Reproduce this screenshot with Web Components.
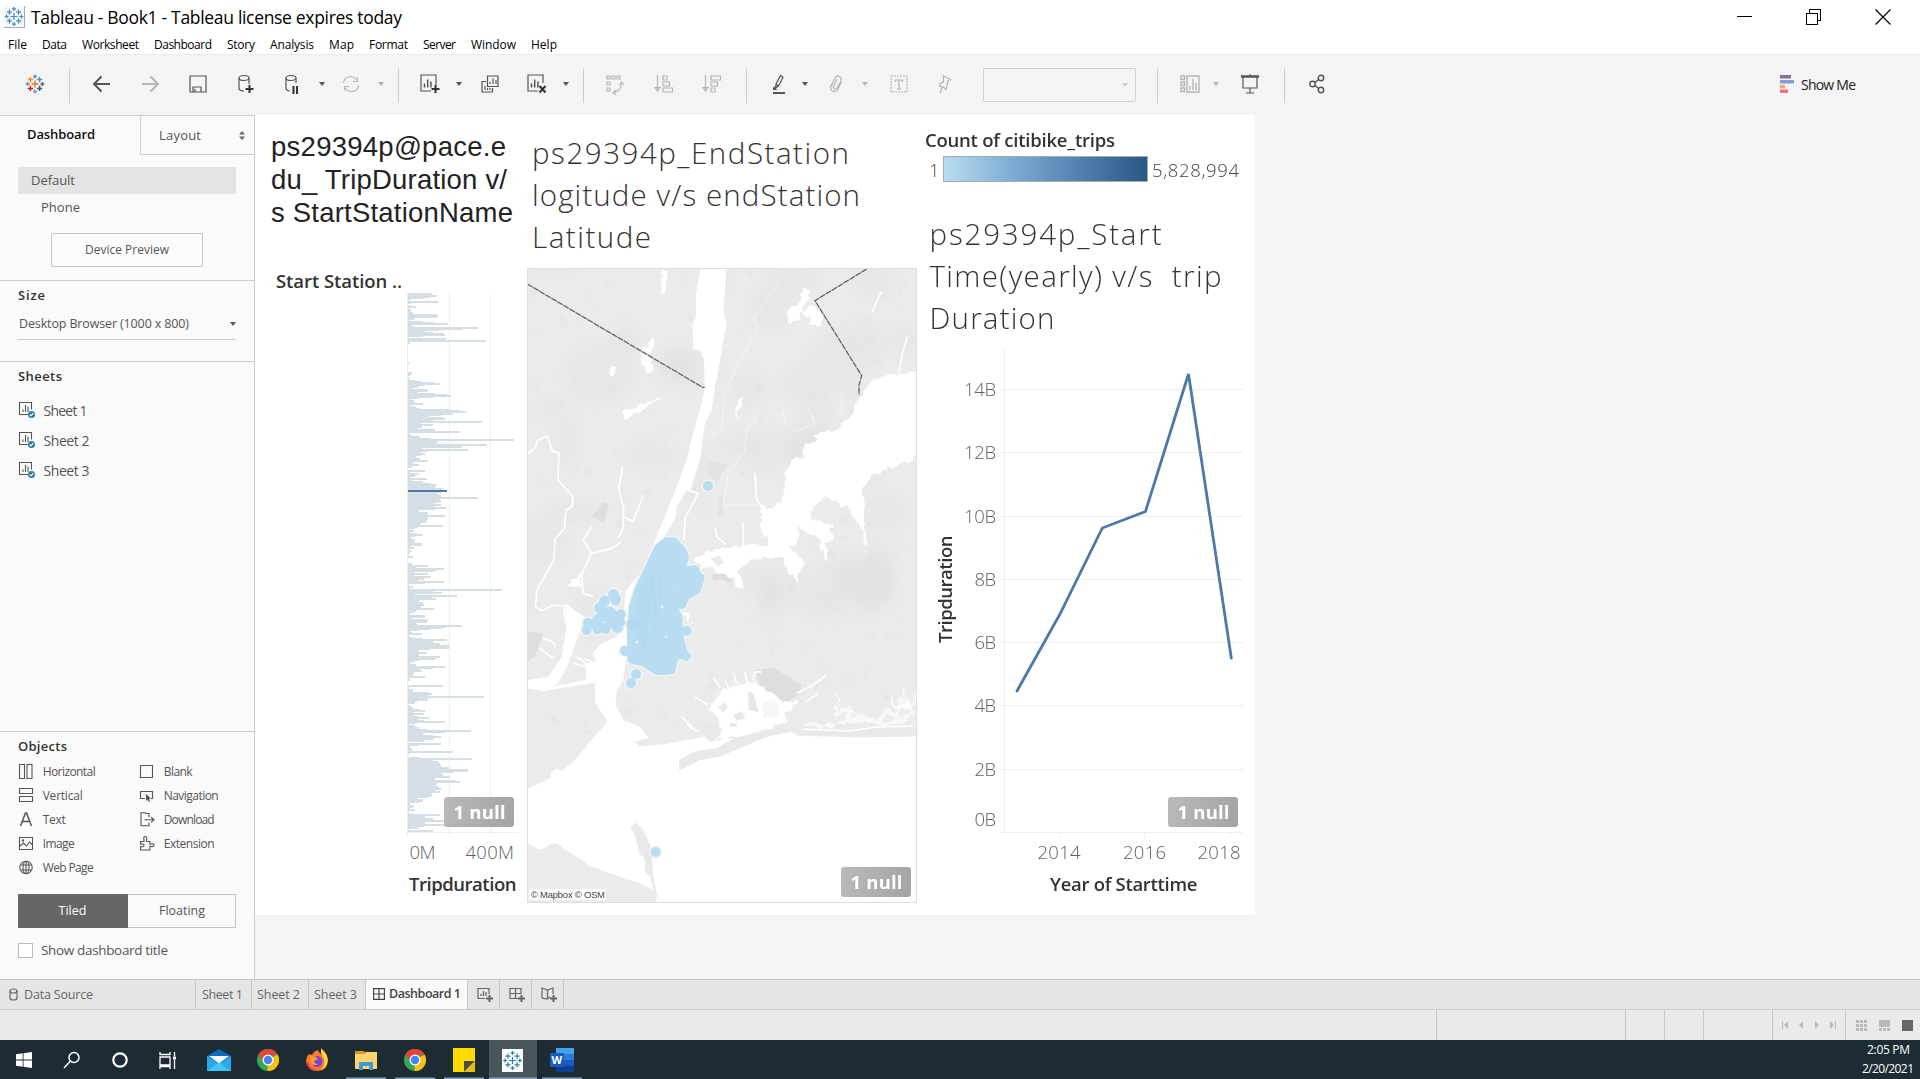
<!DOCTYPE html>
<html lang="en">
<head>
<meta charset="utf-8">
<title>Tableau - Book1</title>
<style>
html,body{margin:0;height:1079px;overflow:hidden;background:#f4f4f4}
body{font-family:"Open Sans","Noto Sans",sans-serif;color:#333}
tb-app{height:1079px}
</style>
</head>
<body>
<tb-app></tb-app>
<script>
class Base extends HTMLElement{
  constructor(){super();const r=this.attachShadow({mode:'open'});r.innerHTML='<style>:host{display:block;box-sizing:border-box}*{box-sizing:border-box}svg{display:block;overflow:visible}'+(this.css||'')+'</style>'+this.html();}
  html(){return '<slot></slot>';}
}
/* One line of text tracked to an exact width */
class FitText extends HTMLElement{
  constructor(){super();this.attachShadow({mode:'open'}).innerHTML='<style>:host{display:block;white-space:pre;flex:none}span{display:inline-block}</style><span><slot></slot></span>';}
  connectedCallback(){
    const w=+this.getAttribute('w'),s=this.shadowRoot.querySelector('span'),n=this.textContent.length;
    if(!w||n<2)return;
    s.style.letterSpacing='0px';
    const nat=s.getBoundingClientRect().width;
    s.style.letterSpacing=((w+1-nat)/(n-1)).toFixed(3)+'px';
    this.style.width=w+'px';
  }
}
customElements.define('fit-text',FitText);

const svg=(w,h,body,extra='')=>`<svg width="${w}" height="${h}" viewBox="0 0 ${w} ${h}" fill="none" stroke="currentColor" stroke-width="1.2" ${extra}>${body}</svg>`;
/* Tableau cross cluster centred on 0,0 */
function crosses(colors){
  const p=[[0,0,3.6],[0,-7.6,2],[0,7.6,2],[-7.4,0,2],[7.4,0,2],[-4.6,-4.4,2.6],[4.6,-4.4,2.6],[-4.6,4.4,2.6],[4.6,4.4,2.6]];
  return p.map(([x,y,r],i)=>`<path d="M${x-r} ${y}h${2*r}M${x} ${y-r}v${2*r}" stroke="${colors[i%colors.length]}"/>`).join('');
}
const plus=(x,y)=>`<path d="M${x-4} ${y}h8M${x} ${y-4}v8" stroke="#333" stroke-width="2"/>`;
const bars=(x,y)=>`<path d="M${x} ${y}v-4M${x+3.2} ${y}v-8M${x+6.4} ${y}v-6" stroke-width="1.5"/>`;
const caret=`<svg width="6" height="4" viewBox="0 0 6 4"><path d="M0 0h6L3 4z" fill="currentColor"/></svg>`;

const icons={
 logo:svg(20,20,`<g transform="translate(10 10)">${crosses(['#e8762c','#5c97b8','#8295b8','#7099a6','#59667e','#eb912c','#5c8fa8','#c72035','#3c5a87'])}</g>`,'style="stroke-width:1.5"'),
 back:svg(20,18,'<path d="M18 9H2M9.500 1.500L2 9 9.500 16.500" stroke-width="2"/>'),
 fwd:svg(20,18,'<path d="M1 9h16M9.500 1.500L17 9 9.500 16.500" stroke-width="2"/>'),
 save:svg(18,18,'<path d="M1 1h16v16H1zM4 17v-5h8v5M6 17v-3"/>'),
 dsplus:svg(18,20,`<ellipse cx="7" cy="4" rx="5" ry="2.500"/><path d="M2 4v11q1 2 5 2M12 4v6"/>${plus(12.5,15)}`),
 dspause:svg(18,20,'<ellipse cx="7" cy="4" rx="5" ry="2.500"/><path d="M2 4v11q1 2 4 2M12 4v5"/><path d="M9.500 12v8M13 12v8" stroke="#333" stroke-width="2"/>'),
 refresh:svg(20,18,'<path d="M2.500 8A7 7 0 0 1 15.500 5M16.500 2v4.500h-4.500M17.500 10A7 7 0 0 1 4.500 13M3.500 16v-4.500H8"/>'),
 newsheet:svg(20,20,`<path d="M11 17H1V1h15v10"/>${bars(4.5,13.5)}${plus(15.5,15)}`),
 dup:svg(18,18,'<path d="M6.500 1H17v10.500H6.500zM5 6.500H1V17h10.500v-4M9 9V7M12 9V3.500M15 9V5M4 15v-4M6.500 15v-2M9 15v-2"/>'),
 clear:svg(20,20,`<path d="M11 17H1V1h15v8"/>${bars(4.5,13.5)}<path d="M12.500 12l6 6.500M18.500 12l-6 6.500" stroke="#333" stroke-width="2"/>`),
 swap:svg(18,20,'<path d="M1 2h3v3H1zM6 2h3v3H6zM11 2h3v3h-3zM1 8h3v3H1zM1 14h3v3H1zM15.500 9q0 8-8 9.500M13.200 11l2.500-2.800L18 11M10 15.800L7 18.700l3 2" stroke-width="1.100"/>'),
 sorta:svg(18,18,'<path d="M2.500 0v15M0 12.500l2.500 3.500 2.500-3.500zM8 1h4v4H8zM8 7h6.500v4H8zM8 13h9.500v4H8z"/>'),
 sortd:svg(18,18,'<path d="M2.500 0v15M0 12.500l2.500 3.500 2.500-3.500zM8 1h9.500v4H8zM8 7h6.500v4H8zM8 13h4v4H8z"/>'),
 pencil:svg(14,20,'<path d="M8.500 1.500L4 10l-.5 4 3-2 4.500-8.500-2.500-2zM4 10l2.500 2M2 13.500l-.5 2H4z"/><path d="M1 19h12" stroke-width="2"/>'),
 clip:svg(14,18,'<path d="M12.500 7L8.500 15q-2 2.500-5 1t-1.500-5L6 3q2-3 4.500-1.500T12 6L8 13q-1.500 2-3 .5T5 10l3-6"/>'),
 textbox:svg(18,18,'<path d="M1 1h16v16H1z" stroke-dasharray="2 1"/><path d="M5.500 7V5h7v2M9 5v9M7 14h4"/>'),
 pin:svg(14,18,'<path d="M5.500 1l7 3.500-2.500 1.500-2 8.500-3-2.500-3.500-1 .5-2.500 3.500-1.500zM4 12L2.500 18"/>'),
 showhide:svg(20,18,'<path d="M1 1h3.500v3.500H1zM1 7h3.500v3.500H1zM1 13h3.500v3.500H1zM7 1h12v16H7zM10 15v-4M13 15V4M16 15V8" stroke-width="1.400"/>'),
 present:svg(18,20,'<path d="M0 2.500h18" stroke-width="2.500"/><path d="M9 0v3M2 3v11h14V3M9 14v5M5 19h8"/>'),
 share:svg(16,20,'<circle cx="12" cy="4" r="2.700"/><circle cx="3.500" cy="10" r="2.700"/><circle cx="12" cy="16" r="2.700"/><path d="M6 8.500L9.500 5.500M6 11.500l3.500 3"/>','style="stroke-width:1.400"'),
 showme:svg(14,18,'<path d="M0 0h11v3.500H0z" fill="#85719b"/><path d="M0 5h14v3.500H0z" fill="#7ea1cf"/><path d="M0 9.800h5v3.500H0z" fill="#f8a27c"/><path d="M0 14.500h8V18H0z" fill="#f76d83"/>','style="stroke:none"'),
 sep:'<i class="sep"></i>',caret
};

class TitleBar extends Base{
 get css(){return `:host{height:32px;display:flex;align-items:center;padding:1px 29px 0 4px;color:#000}
 .ic{width:21px;height:22px;background:#f7f7f7;border-right:1px solid #aaa;border-bottom:1px solid #aaa}
 fit-text{font-size:17.500px;margin-left:6px}.win{margin-left:auto;display:flex;gap:54px}`}
 html(){return `<div class="ic">${svg(20,21,`<g transform="translate(10 10.500)" >${crosses(['#3f8fbc'])}</g>`)}</div><fit-text w="370">Tableau - Book1 - Tableau license expires today</fit-text>
 <div class="win">${svg(15,16,'<path d="M0 7.500h15"/>','shape-rendering="crispEdges"')}${svg(15,16,'<path d="M.5 4.500h11v11H.5zM3.500 4V.5h11v11H12"/>','shape-rendering="crispEdges"')}${svg(16,16,'<path d="M.5.5l15 15M15.500.5l-15 15"/>')}</div>`}
}
customElements.define('tb-titlebar',TitleBar);

class MenuBar extends Base{
 get css(){return `:host{height:22px;display:flex;align-items:center;padding:2.500px 0 0 8px;gap:16px;color:#000;font-size:12px}`}
 html(){return [['File',18],['Data',24],['Worksheet',56],['Dashboard',57],['Story',27],['Analysis',43],['Map',24],['Format',38],['Server',32],['Window',44],['Help',25]].map(([t,w])=>`<fit-text w="${w}">${t}</fit-text>`).join('')}
}
customElements.define('tb-menubar',MenuBar);

class ToolBar extends Base{
 get css(){return `:host{height:61px;background:#f4f4f4;border-top:1px solid #ececec;display:flex;align-items:center;color:#555;padding-bottom:2px}
 span{flex:none}.off{color:#b4b4b4}.sep{display:block;width:1px;height:35px;background:#ccc;margin-top:2px}
 .sel{width:153px;height:34px;border:1px solid #d0d0d0;border-radius:2px;display:flex;align-items:center;justify-content:flex-end;padding-right:7px;color:#ccc;margin-top:2px}
 fit-text{font-size:14px;color:#222;margin-left:7px}`}
 html(){
  const L=[['logo',24.5,20],['sep',69,1],['back',92,20],['fwd',141,20,1],['save',189,18],['dsplus',237,18],['dspause',284,18],['caret',318.5,6],['refresh',340.5,20,1],['caret',377.5,6,1],['sep',398,1],['newsheet',420,20],['caret',455.500,6],['dup',480.5,18],['clear',527,20],['caret',562.5,6],['sep',583,1],['swap',606,18,1],['sorta',655,18,1],['sortd',703,18,1],['sep',746,1],['pencil',772,14],['caret',801.5,6],['clip',829,14,1],['caret',861.5,6,1],['textbox',889.5,18,1],['pin',937.5,14,1],['sel',983,153],['sep',1157,1],['showhide',1180,20,1],['caret',1212.5,6,1],['present',1241,18],['sep',1284,1],['share',1309,16],['showme',1780,14]];
  let c=0;
  return L.map(([k,x,w,off])=>{const m=x-c;c=x+w;return k==='sel'?`<span class="sel" style="margin-left:${m}px">${caret}</span>`:`<span class="${off?'off':''}" style="margin-left:${m}px;width:${w}px">${icons[k]}</span>`}).join('')+'<fit-text w="54">Show Me</fit-text>';
 }
}
customElements.define('tb-toolbar',ToolBar);

const obj={
 h:'<path d="M.5 .5h5v14h-5zM8 .5h5v14H8z"/>',v:'<path d="M.5 .5h13v5H.5zM.5 8.500h13v5H.5z"/>',
 t:'<path d="M1.500 14L6.500 1h1L12.500 14M3.500 9.500h7" stroke-width="1.500"/>',
 i:'<path d="M.5 1.500h13v12H.5zM1 10l3.500-3 3 3 3-4 3 3"/><circle cx="4" cy="4.500" r=".7"/>',
 w:'<circle cx="7" cy="7.500" r="6.200"/><ellipse cx="7" cy="7.500" rx="3" ry="6.200"/><path d="M1.500 5h11M1.500 10h11M7 1v13"/>',
 b:'<path d="M.5 1.500h12v12H.5z"/>',
 n:'<path d="M5 10.500H.5v-7h12v7H11"/><path d="M6 6l5 4.500-2 .3 1 2.500-1.300.5-1-2.400L6 13z" fill="#555" stroke="none"/>',
 d:'<path d="M9 5V1.500H6L5 .8H1v13h8V10.500M4.500 7.700h9M11 5l3 2.700-3 2.700"/>',
 e:'<path d="M.6 5.500H4V4q-1-3.500 1.200-3.500T6.500 4v1.500H10v2.800q4-1.300 4 .9t-4 1v3.800H.6v-3.500q3.400.8 3.400-1.200t-3.400-1z"/>'};
class ObjItem extends Base{
 get css(){return `:host{display:flex;align-items:center;height:24px;gap:10px;font-size:12px;color:#555}`}
 html(){return ''}
 connectedCallback(){
  if(this.done)return;this.done=true;
  const d=document.createElement('template');
  d.innerHTML=svg(14,15,obj[this.getAttribute('icon')],'style="stroke-width:1.100;flex:none"')+`<fit-text w="${this.getAttribute('w')}">${this.getAttribute('label')}</fit-text>`;
  this.shadowRoot.append(d.content);
 }
}
customElements.define('tb-object',ObjItem);

class SideBar extends Base{
 get css(){return `:host{width:255px;height:864px;background:#fafafa;border-right:1px solid #ccc;border-top:1px solid #ccc;display:flex;flex-direction:column;color:#555;font-size:13px}
 .tabs{display:flex;height:39px}.tabs>div{display:flex;align-items:center}.a{width:140px;padding:0 0 3px 27px;color:#111;font-weight:600}.b{flex:1;border-left:1px solid #ccc;border-bottom:1px solid #ccc;padding:0 9px 0 18px;justify-content:space-between}
 h4{margin:0;font-size:13px;font-weight:600;color:#333;line-height:18px}
 .dev{padding:12px 18px 0;height:125px;display:flex;flex-direction:column}
 .def{height:27px;background:#e4e4e4;display:flex;align-items:center;padding:0 0 2px 13px}.ph{height:27px;display:flex;align-items:center;padding:0 0 2px 23px}
 .btn{margin:12px 33px 0;height:34px;border:1px solid #c4c4c4;border-radius:2px;display:flex;align-items:center;justify-content:center;font-size:12px;background:#fcfcfc;padding:0 1px 1px 0}
 section{border-top:1px solid #ccc}.size{height:81px;padding:5px 18px}.dd{display:flex;align-items:center;justify-content:space-between;border-bottom:1px solid #ccc;height:28px;padding:0 0 4px 1px;margin-top:8px}
 .sheets{height:370px;padding:5px 18px}.sh{height:30px;display:flex;align-items:center;gap:8px;font-size:14px;padding-left:1px}.sh fit-text{margin-left:-.5px}.sh:nth-of-type(1){margin-top:10px}
 .objs{padding:5px 18px 0;flex:1}.g{display:grid;grid-template-columns:121px 1fr;margin-top:4px;padding-left:.7px}
 .tf{display:grid;grid-template-columns:109px 109px;height:34px;margin-top:15px;border:1px solid #c4c4c4;font-size:12.500px}.tf>div{display:flex;align-items:center;justify-content:center;padding:0 2px 1px 0}.tf>div:first-child{background:#666;color:#fff;margin:-1px 0 -1px -1px}
 .ck{display:flex;align-items:center;gap:8px;margin-top:13px}.ck i{width:15px;height:15px;border:1px solid #bbb;background:#fff}.ck fit-text{font-size:13.500px}`}
 html(){const s=svg(17,18,'<path d="M9 13.500H.5V1.500h12v7M4 11V8.500M6.500 11V4M9 11V5.500"/><circle cx="12.500" cy="13.500" r="3.500" fill="#2f7ea3" stroke="none"/><path d="M10.800 13.500l1.300 1.300 2.300-2.600" stroke="#fff"/>','style="stroke-width:1.100"');
 const o=(i,l,w)=>`<tb-object icon="${i}" label="${l}" w="${w}"></tb-object>`;
 return `<div class="tabs"><div class="a"><fit-text w="67">Dashboard</fit-text></div><div class="b"><fit-text w="41">Layout</fit-text>${svg(6,9,'<path d="M0 3.500L3 0l3 3.500zM0 5.500L3 9l3-3.500z" fill="#666"/>','style="stroke:none"')}</div></div>
 <div class="dev"><div class="def"><fit-text w="43">Default</fit-text></div><div class="ph"><fit-text w="38">Phone</fit-text></div><div class="btn"><fit-text w="83">Device Preview</fit-text></div></div>
 <section class="size"><h4><fit-text w="26">Size</fit-text></h4><div class="dd"><fit-text w="169" style="font-size:12.500px">Desktop Browser (1000 x 800)</fit-text>${caret}</div></section>
 <section class="sheets"><h4><fit-text w="43">Sheets</fit-text></h4><div class="sh">${s}<fit-text w="43">Sheet 1</fit-text></div><div class="sh">${s}<fit-text w="45">Sheet 2</fit-text></div><div class="sh">${s}<fit-text w="45">Sheet 3</fit-text></div></section>
 <section class="objs"><h4><fit-text w="48">Objects</fit-text></h4><div class="g">${o('h','Horizontal',52)+o('b','Blank',28)+o('v','Vertical',39)+o('n','Navigation',54)+o('t','Text',22)+o('d','Download',50)+o('i','Image',31)+o('e','Extension',50)+o('w','Web Page',50)}</div>
 <div class="tf"><div><fit-text w="27">Tiled</fit-text></div><div><fit-text w="45">Floating</fit-text></div></div><div class="ck"><i></i><fit-text w="126">Show dashboard title</fit-text></div></section>`}
}
customElements.define('tb-sidebar',SideBar);

class NullBadge extends Base{
 get css(){return `:host{position:absolute;width:70px;height:30px;border-radius:3px;background:linear-gradient(100deg,rgba(178,178,178,.9),rgba(154,154,154,.9));color:#fff;font-weight:700;font-size:18.500px;display:flex;align-items:center;justify-content:center;padding-bottom:1px}`}
 html(){return '<fit-text w="51">1 null</fit-text>'}
}
customElements.define('null-badge',NullBadge);

/* Bar runs as top,bottom,end in thirds of a pixel */
const A='69 75 126,75 81 141,81 84 123,84 87 102,87 90 63,90 93 57,93 99 144,99 102 63,105 108 60,108 114 78,114 117 57,117 126 63,126 132 69,132 135 141,135 141 144,141 144 138,144 150 72,150 153 57,153 156 99,156 159 132,159 165 174,165 168 63,168 171 72,171 177 264,177 180 216,180 183 147,183 186 105,186 189 132,189 192 159,192 198 165,198 201 99,201 204 57,204 210 168,210 216 288,216 222 60,276 282 57,306 315 66,315 318 60,321 330 57,330 333 78,333 336 93,336 339 132,339 345 150,345 348 102,348 354 84,354 357 69,357 363 114,363 366 111,366 369 81,369 372 135,372 375 171,375 381 183,381 384 129,384 387 84,387 390 63,390 396 72,396 399 75,399 405 99,405 408 60,408 411 75,411 414 78,414 417 90,417 420 180,420 423 210,423 429 228,429 435 189,435 438 153,438 441 117,441 444 159,444 450 165,450 453 129,453 459 276,459 462 93,462 468 129,468 474 96,474 477 84,477 483 135,483 489 210,489 492 57,492 498 63,498 504 90,504 507 123,507 513 372,513 519 144,519 522 138,522 528 291,528 534 216,534 537 96,537 543 234,543 546 114,546 549 93,549 555 105,555 558 93,558 564 78,564 570 90,570 576 114,576 582 69,582 588 87,588 594 66,600 606 105,606 609 60,609 615 87,615 621 75,621 624 60,624 630 111,630 633 66,633 639 99,639 642 123,642 648 138,648 654 135,654 660 159,666 669 153,669 672 141,672 675 147,675 681 153,681 687 264,687 690 150,690 696 153,696 699 147,699 702 135,702 708 153,708 711 132,711 717 168,717 720 138,720 726 87,726 735 114,735 741 165,741 744 111,744 750 114,750 753 111,753 759 108,759 762 93,762 765 90,765 771 159,771 774 84,774 777 75,777 780 60,780 786 72,786 789 63,789 792 81,792 798 96,798 801 75,801 804 63,804 807 66,807 813 75,813 816 72,816 819 75,819 828 96,828 831 63,831 837 72,837 840 57,840 846 66,846 852 60,852 858 57,858 864 69,879 885 66,885 891 114,891 894 78,894 900 162,900 903 141,903 906 132,906 909 72,909 915 114,915 918 75,918 924 123,924 930 102,930 933 84,933 939 162,939 942 105';
const B='12 18 57,18 24 69,24 27 60,27 33 336,33 36 129,36 42 156,42 45 75,45 51 201,51 54 126,54 60 138,60 63 90,63 66 84,66 72 99,72 78 102,78 84 93,84 90 132,90 93 81,93 96 78,96 99 69,99 105 60,105 114 105,114 117 66,117 123 114,123 129 111,129 132 78,132 135 81,135 141 216,141 144 168,144 147 156,147 150 120,150 153 84,153 156 60,156 159 66,159 165 96,165 171 57,171 174 69,174 177 96,177 183 171,183 189 129,189 195 150,195 201 180,201 207 177,207 210 120,210 216 87,216 222 111,222 228 87,228 234 150,234 237 138,237 240 135,240 243 87,243 246 72,246 252 60,252 258 78,258 264 165,264 267 129,267 270 90,270 276 96,276 282 72,282 288 69,288 294 105,294 297 57,297 303 60,315 321 159,321 327 57,327 336 69,336 339 117,339 345 126,345 348 114,348 354 282,354 363 114,363 366 81,366 372 75,375 381 63,381 387 69,387 390 90,390 396 105,396 399 69,399 405 102,405 408 72,408 411 87,411 417 117,417 420 84,420 423 102,423 429 165,429 432 75,432 435 57,435 441 75,441 447 87,447 450 111,450 456 243,456 459 165,459 465 99,465 468 129,468 474 153,474 480 132,480 486 102,489 495 153,495 498 87,498 504 60,504 513 66,513 519 189,519 525 57,531 534 87,534 540 246,540 543 129,543 549 144,549 555 150,555 561 153,561 567 177,567 576 234,576 579 189,579 582 153,582 588 159,588 594 180,594 600 135,600 603 195,603 609 210,609 615 141,615 618 135,618 624 147,624 630 153,630 633 135,633 639 150,639 642 123,642 648 126,648 651 123,651 654 114,654 657 84,657 666 99,666 669 87,669 675 60,675 681 72,681 684 69,684 687 60,687 693 75,693 699 57,699 702 60,702 708 150,708 714 105,714 720 129,720 726 180,726 732 105,732 738 340,738 741 105,741 747 84,747 750 57,750 756 129';
function barPath(){
 const f=(s,o)=>s.split(',').map(r=>{const[a,b,e]=r.split(' ').map(Number);return `M54 ${a+o}H${e}V${b+o}H54z`}).join('');
 return f(A,0)+f(B,930);
}
const tx=(x,y,w,t,c='')=>`<text x="${x}" y="${y}" textLength="${w}" class="${c}">${t}</text>`;
const chartCss=`text{font-size:18.500px;font-weight:300;fill:#606060;stroke:none;white-space:pre}.h{font-weight:550;fill:#333;font-size:18.500px}`;

/* Both charts use page coordinates in their viewBox */
class StationBars extends Base{
 get css(){return `:host{width:262px;position:relative}.t{padding:15px 0 0 6px;height:150px;font:27.500px/33px "Liberation Sans",Arial,sans-serif;color:#222}null-badge{left:179px;top:682px}`+chartCss}
 html(){return `<div class="t"><fit-text w="234">ps29394p@pace.e</fit-text><fit-text w="235">du_ TripDuration v/</fit-text><fit-text w="241">s StartStationName</fit-text></div>
 <svg width="262" height="650" viewBox="265 265 262 650">
 ${tx(276,287.5,126,'Start Station ..','h')}
 <g shape-rendering="crispEdges"><path d="M407.500 293V836M449.500 293V836M490.500 293V836M407 832.500h112" stroke="#efefef"/>
 <path transform="translate(390 270) scale(.333333)" fill="#d5dde5" d="${barPath()}"/><path fill="#4e79a7" d="M408 490h39v2h-39z"/></g>
 ${tx(409.5,858.5,26,'0M')}${tx(465.5,858.5,48.5,'400M')}${tx(409,890.5,107.5,'Tripduration','h')}</svg><null-badge></null-badge>`}
}
customElements.define('station-bars',StationBars);

function landTexture(){
 let s=7,o='';const r=()=>(s=(s*16807)%2147483647)/2147483647;
 o+='<g filter="url(#soft)">';
 for(let i=0;i<45;i++)o+=`<ellipse cx="${(r()*1170)|0}" cy="${(r()*1100)|0}" rx="${(30+r()*70)|0}" ry="${(25+r()*60)|0}" fill="#e0e0e0" opacity=".35"/>`;
 o+='</g>';
 for(let i=0;i<190;i++){const x=r()*1170+22,y=r()*1500+25,w=5+r()*18,h=5+r()*18,k=r()*14-7;
  o+=`<path d="M${x|0} ${y|0}l${w|0} ${k|0}l${k|0} ${h|0}l${-w|0} ${(-k)|0}z" fill="${i%3?'#e4e5e5':'#e0e3e1'}" stroke="#dcdddd" stroke-width="1" opacity="${(.2+r()*.4).toFixed(2)}"/>`}
 return o;
}
class StationMap extends Base{
 get css(){return `:host{width:392px;position:relative}.t{padding:17px 0 0 5px;height:153px;font-size:29.500px;line-height:42px;font-weight:340;color:#333}
 svg{overflow:hidden}.m{width:390px;height:635px;border:1px solid #dedede;background:#ebebeb}null-badge{left:314px;top:752px}
 .c{position:absolute;left:2px;top:774px;background:rgba(255,255,255,.75);height:11px;padding:0 2px;font:400 9.500px/11px "Liberation Sans",sans-serif;color:#444}`}
 html(){return `<div class="t"><fit-text w="316">ps29394p_EndStation</fit-text><fit-text w="327">logitude v/s endStation</fit-text><fit-text w="118">Latitude</fit-text></div>
 <div class="m"><svg width="388" height="633" viewBox="24 27 1164 1899" fill="none">
 <defs><filter id="soft" x="-10%" y="-10%" width="120%" height="120%"><feGaussianBlur stdDeviation="16"/></filter><filter id="r" x="-5%" y="-5%" width="110%" height="110%"><feTurbulence type="fractalNoise" baseFrequency=".045" numOctaves="2" seed="4"/><feDisplacementMap in="SourceGraphic" scale="26" xChannelSelector="R" yChannelSelector="G"/></filter></defs>
 ${landTexture()}
 <g fill="#dedede"><path d="M705 1230l55-6 85 50-10 30-40 25-35-20-40-30zM216 768l35-42 16 5-15 58zM575 945l45-12 20 20-10 15-30-12-20 8z"/><path d="M600 705h10v65h-18zM560 600l65 12-35 55-25-20z" fill="#e1e4e2"/></g>
 <path fill="#fff" d="M543 20L528 100 527 175 518 190 520 268 541 272 552 300 554 385 545 430 525 500 500 600 470 680 430 780 395 865 365 935 335 970 315 995 313 1050 318 1070 290 1130 240 1155 218 1180 230 1205 195 1210 200 1258 150 1270 70 1285 22 1260V1268L70 1293 150 1280 225 1268 225 1325 262 1385 215 1440 160 1505 110 1545 60 1570 22 1587V1750L60 1770 105 1748 215 1820 300 1850 360 1870 400 1890 412 1935H1200V1420L1175 1430 1000 1432 835 1427 800 1408 740 1420 640 1435 600 1440 565 1445 560 1430 500 1440 440 1452 360 1460 343 1445 385 1435 360 1400 310 1380 287 1335 290 1290 310 1260 330 1100 350 960 395 880 440 820 468 770 467 745 500 690 512 690 540 600 555 490 575 450 585 380 602 290 610 240 620 195 610 150 620 20z"/>
 <path fill="#fff" d="M135 1030l5 70-15 90-40 60-63 10v25l50 8 40-20 30-55 40-110 20-30z"/>
 <g filter="url(#r)"><path fill="#fff" d="M1200 315L1170 345 1130 340 1080 350 1055 360 1035 390 1015 420 990 470 965 490 950 515 880 520 890 545 855 550 850 590 810 600 790 650 790 700 765 740 722 735 720 800 745 852 680 855 620 865 560 870 525 900 550 930 580 920 600 940 640 950 650 980 675 985 655 930 680 905 740 890 780 893 800 920 835 970 840 935 850 905 815 865 835 840 835 800 900 840 915 900 925 900 920 850 935 840 935 795 885 780 870 760 910 710 985 740 1010 790 1030 815 1033 880 1040 830 1035 750 1025 690 1060 645 1110 620 1170 605 1200 590zM530 1435L560 1430 600 1440 598 1380 565 1345 600 1300 630 1280 700 1262 745 1290 790 1325 830 1325 800 1360 800 1390 770 1395 720 1415 640 1435z"/>
 <path fill="#fff" d="M800 160l30-30 30-50 10 30-40 70-20 10zM850 150l30-10 25 20v40l-30-10-5-20-25-5zM425 30h17l-5 75h-13zM390 225l15 15-10 30 2 65-15 5-15-15-3-50 22-20zM268 330l15-10 5 10-5 15-13 2zM310 460l60-32 70-15-50 22-75 45zM655 415l13-8-15 65h-6zM145 970l35-30 5 40-25 5zM470 1050l35 10 10 30-20-15z"/></g>
 <path fill="#ebebeb" d="M22 1115l48-10 40 30 20 10-30 60-78 45z"/><path fill="#dedede" d="M22 1115l48 5-25 70-23 15z"/>
 <g stroke="#fff" stroke-width="5" stroke-linejoin="round"><path d="M22 582l25-20 5-20 30-15 15 45 20 8-3 80 45 50-3 30-18 10-5 55-27 30-5 65-50 90-5 50 20 12 35-17 30 3 5 50"/><path d="M308 620l-12 65 15 60-2 60-15 30M310 770l30 15 30-80M215 800l-25 40 25 40 60-15 30-20M215 880l-30 60 5 60 30 10M500 690l35 10-40 75-3 65M1162 230l-15 50-10 60M705 640l5 80 20 25M1085 95l-20 40-10 25M585 805l5 25 30 25M670 785v70l-10 20M60 1165l40 30M70 1135q40 10 35 30M160 1210l60 15M170 1190l50 35M190 1195l45 20M525 1310l40 25M580 1252l20 30M615 1262l12 25M640 1240l10 30M675 1235l5 30M700 1262q0-35 25-25M830 1300l50-25 40-30M860 1325l35-25M500 1390q30 30 40 20M485 1370l40 40"/><path d="M780 65l-80 110 15 30-40 70-60 120-10 110-50 30M715 460l-35 50-5 60-50 70-15 95h110M785 445l10 45 30 25 60-25-20-45M965 400v60l-30 20" stroke-width="2" opacity=".8"/></g>
 <g filter="url(#r)"><path stroke="#f8f8f8" stroke-width="12" d="M940 1335l10 30 40-20-10 40 40-15 30 20 30-10 20-30 30 20 15-50 25 30 20-40M950 1385h60l30-10 50 15 70-10 20-30M860 1390l80 10"/><path stroke="#fff" stroke-width="5" d="M950 1300l10 40 50 20M1110 1310l10 30 50-5M1150 1290l15 45"/></g>
 <path fill="#e9e9e9" d="M478 1500L520 1475 590 1465 640 1435 740 1410 805 1406 835 1410 740 1430 600 1490 540 1500 478 1532zM835 1425l35-20 90 12 100-12 115-2v16l-115 5-120-2zM330 1700l20-12 22 25 22 50 5 80 13 70h-6l-14-60-18-20v-40l-15-10-15-60zM530 1400l60-15 12 40-35 20z"/>
 <path stroke="#fff" stroke-width="5" d="M850 1408l60 2 80 3 80-12 110-3"/>
 <path fill="#e7e8e8" stroke="#e9e9e9" d="M595 1340l20-12 8 15-15 14zM685 1295l15 5 15 55-30-5zM640 1365l25-10 10 20-25 5zM630 1390h20v10h-20z"/><path fill="#f7f7f7" d="M725 1325l30-5 25 15-5 35-45 5z"/><path d="M572 895l25-8 15 22-20 10z" fill="#ebebeb"/>
 <path fill="#fff" d="M92 1538l20-13 12 12-15 16-16-3z"/><path d="M22 72L548 382M1040 27L885 122 1025 347 1017 375V402" stroke="#ddd" stroke-width="6"/>
 <path d="M22 72L548 382h6M1040 27L885 122 1025 347 1017 375V405" stroke="#5c5c5c" stroke-width="3.500" stroke-dasharray="18 3"/>
 <g stroke-linejoin="round" stroke-linecap="round"><g fill="#f3f3f3" stroke="#f3f3f3"><path stroke-width="34" d="${this.core}"/><g stroke-width="9">${this.dots}</g></g>
 <g fill="#b8dcf0"><path stroke="#b8dcf0" stroke-width="26" d="${this.core}"/>${this.dots}</g></g>
 <path d="M355 990l25-40 25 0-15 100-15 130-25-40z" fill="#aed6ef" opacity=".45"/><path d="M400 960l6 150M378 1010l25 120M425 920l-12 150" stroke="#acd5ee" opacity=".4" stroke-width="4"/><circle cx="338" cy="1093" r="16" fill="#aed6ef" opacity=".7"/><g fill="#f5f5f5"><circle cx="426" cy="1040" r="4"/><circle cx="438" cy="1130" r="3"/><circle cx="351" cy="1146" r="4"/><circle cx="460" cy="979" r="2"/><circle cx="253" cy="1087" r="3"/></g>
 </svg></div><div class="c"><fit-text w="73">© Mapbox © OSM</fit-text></div><null-badge></null-badge>`}
 get core(){return 'M440 845L460 845 485 870 494 892 480 935 520 930 540 955 530 990 500 1005 485 1030 458 1040 474 1070 475 1115 485 1160 490 1180 462 1190 453 1230 435 1232 410 1232 370 1206 335 1198 335 1110 340 1040 358 985 382 935 415 865z'}
 get dots(){return [[280,1003,16],[286,1015,16],[287,1022,15],[254,1022,16],[240,1043,17],[204,1089,15],[200,1110,15],[233,1108,15],[257,1107,15],[292,1102,17],[302,1063,15],[300,1085,16],[262,1072,33],[235,1085,22],[285,1082,22],[222,1093,15],[348,1243,15],[333,1269,15],[315,1173,15],[500,1113,15],[498,1188,15],[486,1031,15],[564,678,15],[407,1776,15],[338,1096,19],[522,931,16],[538,955,16]].map(a=>`<circle cx="${a[0]}" cy="${a[1]}" r="${a[2]}"/>`).join('')}
}
customElements.define('station-map',StationMap);

class YearTrend extends Base{
 get css(){return `:host{flex:1;position:relative;display:flex;flex-direction:column}
 .l{height:85px;padding:12px 0 0 6px}.l .n{font-size:18.500px;font-weight:550;color:#333;line-height:25px}.r{display:flex;align-items:center;font-size:18.500px;font-weight:300;color:#444;padding-left:4px;height:26px;margin-top:4px}.r fit-text{width:10px}.g{width:205px;height:26px;border:1px solid #aaa;margin:0 4px;background:linear-gradient(90deg,#b9ddf1,#7aaad2 35%,#4e79a7 72%,#2a5783)}
 .t{padding:13px 0 0 10.500px;height:145px;font-size:29.500px;line-height:42px;font-weight:340;color:#333}null-badge{left:249px;top:682px}`+chartCss}
 html(){
 const y=[['14B',389.5,32],['12B',452.5,32],['10B',516.5,32],['8B',579.5,21.5],['6B',642.5,21.5],['4B',705.5,21.5],['2B',769.5,21.5]];
 return `<div class="l"><div class="n"><fit-text w="189">Count of citibike_trips</fit-text></div><div class="r"><fit-text>1</fit-text><div class="g"></div><fit-text w="86">5,828,994</fit-text></div></div>
 <div class="t"><fit-text w="231">ps29394p_Start</fit-text><fit-text w="291">Time(yearly) v/s  trip</fit-text><fit-text w="124">Duration</fit-text></div>
 <svg width="336" height="570" viewBox="919 345 336 570"><g stroke="#efefef" shape-rendering="crispEdges"><path d="M1004.500 349V832M1000 832.500H1243M1059.500 832v5M1144.500 832v5M1230.500 832v5M1016.500 832v2M1101.500 832v2M1187.500 832v2"/>${y.map(a=>`<path d="M1000 ${a[1]}H1243"/>`).join('')}</g>
 ${y.map(a=>tx(996-a[2],a[1]+6.5,a[2],a[0])).join('')}${tx(974.5,826,21.5,'0B')}
 <path d="M1017 691L1060 614 1102.300 528 1145.500 511.500 1188.500 374 1231.300 658" stroke="#4e79a7" stroke-width="2.800" fill="none" stroke-linecap="round"/>
 ${tx(1037.5,858.5,43,'2014')}${tx(1123,858.5,43,'2016')}${tx(1197.5,858.5,43,'2018')}${tx(1050,890.5,147.5,'Year of Starttime','h')}
 <text class="h" transform="translate(952 643) rotate(-90)" textLength="107.500">Tripduration</text></svg><null-badge></null-badge>`}
}
customElements.define('year-trend',YearTrend);

class DashCanvas extends Base{
 get css(){return `:host{width:1000px;height:800px;background:#fff;display:flex;padding-left:10px}`}
}
customElements.define('dash-canvas',DashCanvas);

class SheetTabs extends Base{
 get css(){return `:host{height:31px;background:#e5e5e5;border-top:1px solid #c6c6c6;border-bottom:1px solid #ccc;display:flex;font-size:12.500px;color:#666}
 div{border-right:1px solid #c6c6c6;display:flex;align-items:center;flex:none}.on{background:#fafafa;color:#444;font-weight:600;padding-bottom:2px}`}
 html(){const d=(w,p,c,k='')=>`<div class="${k}" style="width:${w}px;padding-left:${p}px">${c}</div>`;const pl='<path d="M9 11.500h7M12.500 8v7" stroke-width="2"/>';
 return d(196,9,svg(9,13,'<ellipse cx="4.500" cy="3" rx="3.500" ry="2"/><path d="M1 3v7q0 2 3.500 2t3.500-2V3"/>')+'<fit-text w="68" style="margin-left:6px">Data Source</fit-text>')+d(56,6,'<fit-text w="40">Sheet 1</fit-text>')+d(57,5,'<fit-text w="42">Sheet 2</fit-text>')+d(57,5,'<fit-text w="42">Sheet 3</fit-text>')
 +d(102,6.5,svg(12,12,'<path d="M.6.6h10.800v10.800H.6zM6 0v12M0 6h12"/>')+'<fit-text w="71" style="margin-left:4.500px">Dashboard 1</fit-text>','on')
 +d(32,8.5,svg(16,15,'<path d="M8 11.500H1V1.500h11V7M4 9V7M6.500 9V4M9 9V5"/>'+pl))+d(32,8.5,svg(16,15,'<path d="M9 11.500H1V1.500h11V7M6.500 1v11M1 6.500h11"/>'+pl))+d(32,8.5,svg(16,15,'<path d="M9 10L6 12 1 11V1l5.500 2L12 1v6M6.500 3v9"/>'+pl))}
}
customElements.define('tb-tabs',SheetTabs);

class StatusBar extends Base{
 get css(){return `:host{height:30px;background:#eaeaea;display:flex;justify-content:flex-end;color:#b9b9b9}
 div{border-left:1px solid #c6c6c6;display:flex;align-items:center;flex:none}`}
 html(){const f='style="stroke:none"';const q=(x,y,w=3,h=3)=>`<path d="M${x} ${y}h${w}v${h}h${-w}z" fill="currentColor"/>`;let g='',b='';for(let i=0;i<3;i++){b+=q(i*4,8);for(let j=0;j<3;j++)g+=q(i*4,j*4)}
 return `<div style="width:189px"></div><div style="width:39px"></div><div style="width:39px"></div><div style="width:69px"></div><div style="width:73px;padding-left:9px;gap:10px">${svg(6,8,'<path d="M0 0h1v8H0zM6 0v8L2 4z" fill="currentColor"/>',f)}${svg(6,8,'<path d="M5 0v8L1 4z" fill="currentColor"/>',f)}${svg(6,8,'<path d="M1 0v8l4-4z" fill="currentColor"/>',f)}${svg(6,8,'<path d="M5 0h1v8H5zM0 0v8l4-4z" fill="currentColor"/>',f)}</div>
 <div style="width:75px;padding-left:10px;gap:12px">${svg(11,11,g,f)}${svg(11,11,q(0,0,11,7)+b,f)}${svg(11,11,'<path d="M0 0h11v11H0z" fill="#666"/>',f)}</div>`}
}
customElements.define('tb-status',StatusBar);

class TaskBar extends Base{
 get css(){return `:host{height:39px;background:#1c2c32;display:flex;color:#fff}
 .i{width:40px;height:39px;display:flex;align-items:center;justify-content:center;flex:none;padding-top:1px}.r{box-shadow:inset 0 -1.500px #829fbd}.on{width:48px;background:#48555b}
 .ck{margin-left:auto;padding:1px 7px 0 0;font-size:12px;line-height:18.500px;display:flex;flex-direction:column;align-items:flex-end}.ck fit-text:first-child{margin-right:4px}`}
 html(){
 const ch=svg(24,24,'<circle cx="12" cy="12" r="11" fill="#35a853"/><path d="M12 12l9.500-5.500A11 11 0 0 1 11.500 23z" fill="#fbc116"/><path d="M12 1A11 11 0 0 0 2.500 6.500L8 15l4-8h9.800A11 11 0 0 0 12 1z" fill="#ea4335"/><circle cx="12" cy="12" r="5.500" fill="#fff"/><circle cx="12" cy="12" r="4.200" fill="#4285f4"/>','style="stroke:none"');
 const L=[[24,svg(16,16,'<path d="M0 2.200L6.700 1.300V7.500H0zM7.500 1.200L16 0v7.500H7.500zM0 8.400h6.700v6.300L0 13.800zM7.500 8.400H16V16l-8.500-1.200z" fill="#fff"/>','style="stroke:none"')],
 [72,svg(18,18,'<circle cx="11" cy="6.500" r="5"/><path d="M7.500 10L1 17"/>','style="stroke-width:1.500"')],
 [120,svg(18,18,'<circle cx="9" cy="9" r="6.700" stroke-width="2.200"/>')],
 [168,svg(18,17,'<path d="M1 5h10v8H1zM1 0v2.500h10V0M1 17v-2.500h10V17M15.500 0v4M15.500 8v9"/><path d="M14 4.500h3v3h-3z" fill="#fff" stroke="none"/>','style="stroke-width:1.300"')],
 [219,svg(24,22,'<path d="M0 7L12 0l12 7v14H0z" fill="#0f6cbd"/><path d="M0 7l12 8L24 7v15H0z" fill="#29a8ea"/><path d="M0 22l12-9 12 9z" fill="#50d9ff" opacity=".6"/><path d="M2 7h20l-10 7.500z" fill="#f5f9fd"/>','style="stroke:none"')],
 [268,ch],
 [316.5,svg(24,24,'<path d="M4 6l3 1q2-4 6-5 0 2 3 4V0q6 5 7 12 0 10-10 11Q2 23 1 13 1 9 4 6z" fill="#ff7b29"/><path d="M16 1q7 5 6.500 12Q22 20 15 22q6-4 4-11-3-5-3-10z" fill="#ffd93b"/><path d="M3 14q3 9 11 8-10 2-13-8z" fill="#f4305c"/><circle cx="12" cy="13.500" r="5.500" fill="#7d45cf"/><path d="M5 8q6 0 8 3l-4 2q0 3 4 3-4 3-7-1z" fill="#ff9d2b"/>','style="stroke:none"')],
 [366,svg(22,20,'<path d="M0 1h9l2 2h-2v2H0z" fill="#d99a18"/><path d="M0 4h9l2-2h11v17H0z" fill="#ffd46b"/><path d="M4 20v-8h14v8h-4v-4H8v4z" fill="#3a9be0"/>','style="stroke:none"'),'r'],
 [415,ch,'r'],
 [464,svg(22,24,'<path d="M0 0h22v24H0z" fill="#ffda00"/><path d="M11 24V13h11z" fill="#4b4b43"/><path d="M22 13v11H11z" fill="#e9bd00"/>','style="stroke:none"'),'r'],
 [512.5,svg(21,23,`<path d="M0 0h21v23H0z" fill="#fff" stroke="none"/><g transform="translate(10.500 11.500)">${crosses(['#2b7fae'])}</g>`),'on r'],
 [562,svg(24,24,'<path d="M6 0h18v6H6z" fill="#41a5ee"/><path d="M6 6h18v6H6z" fill="#2b7cd3"/><path d="M6 12h18v6H6z" fill="#185abd"/><path d="M6 18h18v6H6z" fill="#103f91"/><path d="M0 5h14v14H0z" fill="#185abd"/><text x="1.500" y="16" font-size="11" font-weight="700" fill="#fff" font-family="Open Sans">W</text>','style="stroke:none"'),'r']];
 let c=0;return L.map(([x,s,k=''])=>{const w=k.includes('on')?48:40,m=x-w/2-c;c=x+w/2;return `<div class="i ${k}" style="margin-left:${m}px">${s}</div>`}).join('')+'<div class="ck"><fit-text w="42">2:05 PM</fit-text><fit-text w="51">2/20/2021</fit-text></div>'}
}
customElements.define('os-taskbar',TaskBar);

class App extends Base{
 get css(){return `:host{display:flex;flex-direction:column;background:#fff}.main{display:flex;height:864px;background:#f4f4f4}`}
 html(){return `<tb-titlebar></tb-titlebar><tb-menubar></tb-menubar><tb-toolbar></tb-toolbar><div class="main"><tb-sidebar></tb-sidebar><dash-canvas><station-bars></station-bars><station-map></station-map><year-trend></year-trend></dash-canvas></div><tb-tabs></tb-tabs><tb-status></tb-status><os-taskbar></os-taskbar>`}
}
customElements.define('tb-app',App);
</script>
</body>
</html>
